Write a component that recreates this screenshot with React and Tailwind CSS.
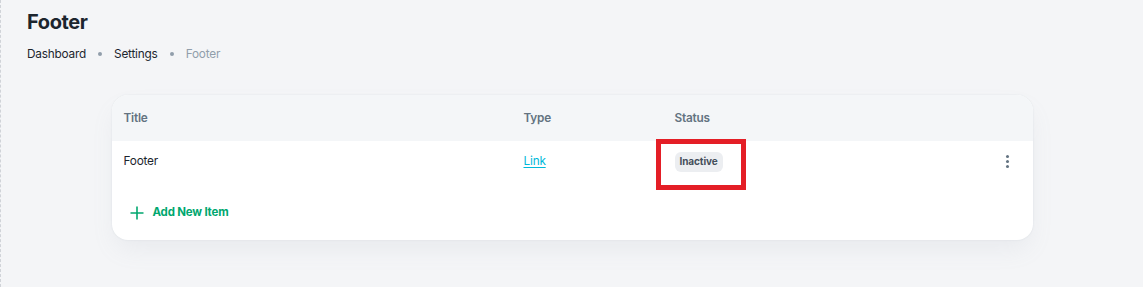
import React from "react";

const rows = [{ title: "Footer", type: "Link", status: "Inactive" }];

export default function App() {
  return (
    <div
      className="min-h-[287px] w-full bg-[#f4f5f7] border-l border-dashed border-[#d0d3d8] text-[#1c252e]"
      style={{ fontFamily: "Inter, 'Noto Sans', sans-serif" }}
    >
      <div className="px-[26px] pt-[9px]">
        <h1 className="text-[20px] font-bold leading-[26px] tracking-[-0.4px]">Footer</h1>
        <nav className="mt-[9px] flex items-center text-[11.8px] leading-[20px] tracking-[-0.2px]">
          <span>Dashboard</span>
          <span className="mx-[12px] h-[4px] w-[4px] rounded-full bg-[#919eab]" />
          <span>Settings</span>
          <span className="mx-[12px] h-[4px] w-[4px] rounded-full bg-[#919eab]" />
          <span className="text-[#919eab]">Footer</span>
        </nav>
      </div>

      {/* table card */}
      <div className="mx-auto mt-[31px] w-[921px] overflow-hidden rounded-[16px] bg-white shadow-[0_0_2px_rgba(145,158,171,0.2),0_12px_24px_-4px_rgba(145,158,171,0.12)]">
        <div className="flex h-[46px] items-center bg-[#f4f6f8] px-[12px] pt-[2px] text-[11.8px] font-semibold tracking-[-0.2px] text-[#637381]">
          <div className="w-[400px]">Title</div>
          <div className="w-[151px]">Type</div>
          <div>Status</div>
        </div>

        {rows.map((r) => (
          <div key={r.title} className="relative flex h-[41px] items-center px-[12px] text-[11.8px] tracking-[-0.2px]">
            <div className="w-[400px]">{r.title}</div>
            <div className="w-[151px]">
              <span className="text-[#00b8d9] underline underline-offset-2">{r.type}</span>
            </div>
            <div className="relative">
              <span className="inline-flex h-[20px] items-center rounded-[6px] bg-[#eceef1] px-[5px] text-[10px] font-bold tracking-[-0.1px] text-[#454f5b]">
                {r.status}
              </span>
              <span className="pointer-events-none absolute left-[-19px] top-[-13px] h-[51px] w-[90px] border-[5px] border-[#e41e26]" />
            </div>
            <div className="ml-auto mr-[12px] flex flex-col gap-[2px]">
              <span className="h-[3px] w-[3px] rounded-full bg-[#637381]" />
              <span className="h-[3px] w-[3px] rounded-full bg-[#637381]" />
              <span className="h-[3px] w-[3px] rounded-full bg-[#637381]" />
            </div>
          </div>
        ))}

        <div className="flex h-[58px] items-center px-[18px] pt-[3px]">
          <button className="flex items-center gap-[9px] text-[11.5px] font-bold tracking-[-0.2px] text-[#00a76f]">
            <svg width="14" height="14" viewBox="0 0 14 14" fill="none" stroke="currentColor" strokeWidth="1.6">
              <path d="M7 0.5v13M0.5 7h13" />
            </svg>
            Add New Item
          </button>
        </div>
      </div>
    </div>
  );
}
